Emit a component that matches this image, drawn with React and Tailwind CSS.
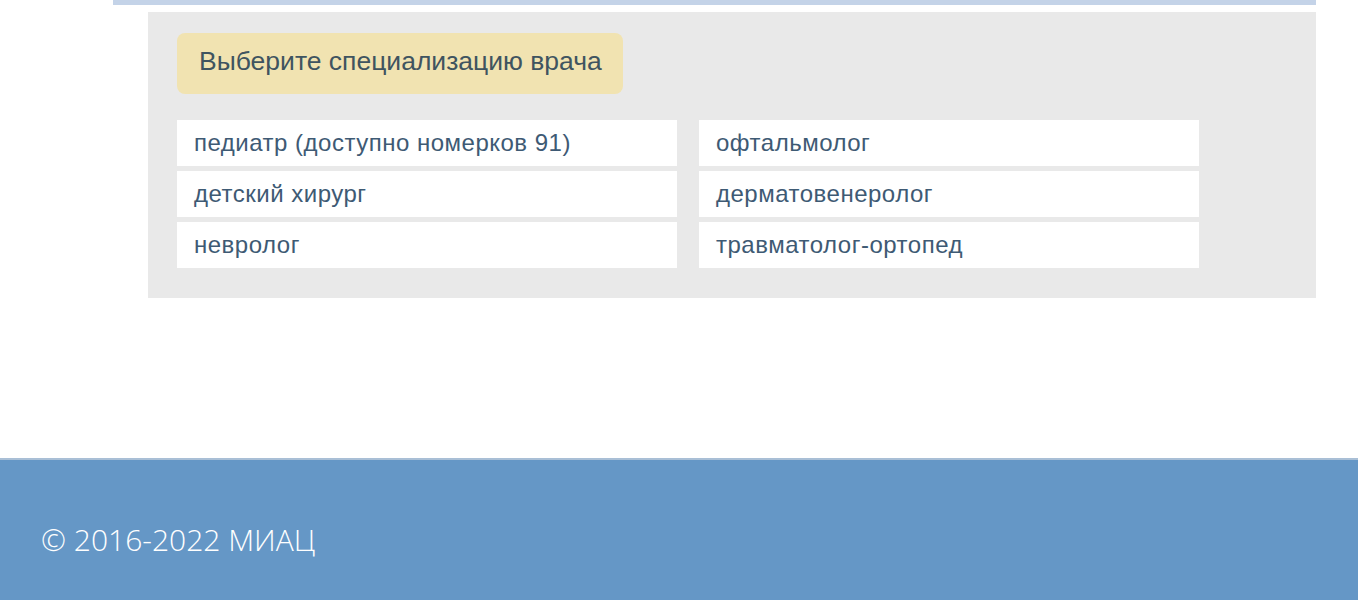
import React from "react";

const specialties = [
  "педиатр (доступно номерков 91)",
  "офтальмолог",
  "детский хирург",
  "дерматовенеролог",
  "невролог",
  "травматолог-ортопед",
];

const App = () => {
  return (
    <div className="w-[1358px] h-[600px] bg-white flex flex-col font-['Liberation_Sans',Arial,sans-serif]">
      <div className="pl-[113px] pr-[42px]">
        <div className="h-[5px] bg-[#c4d3e8]"></div>
      </div>

      <div className="pl-[148px] pr-[42px] pt-[7px]">
        <div className="bg-[#e9e9e9] pl-[29px] pt-[21px] pb-[30px]">
          <div className="inline-flex items-center h-[61px] pl-[22px] pr-[21px] pb-[3px] rounded-[8px] bg-[#f1e3b1] text-[26.5px] text-[#3f5460]">
            Выберите специализацию врача
          </div>
          <div className="mt-[26px] grid grid-cols-[500px_500px] gap-x-[22px] gap-y-[5px]">
            {specialties.map((name) => (
              <div
                key={name}
                className="h-[46px] bg-white flex items-center pl-[17px] text-[24px] tracking-[0.5px] text-[#3e5a74]"
              >
                {name}
              </div>
            ))}
          </div>
        </div>
      </div>

      <div className="flex-1"></div>

      <footer className="h-[142px] bg-[#6597c6] border-t-2 border-[#a9bfd6] flex items-center pl-[41px] pt-[18px]">
        <span className="text-[30px] font-light text-white font-['Open_Sans',sans-serif]">
          © 2016-2022 МИАЦ
        </span>
      </footer>
    </div>
  );
};

export default App;
